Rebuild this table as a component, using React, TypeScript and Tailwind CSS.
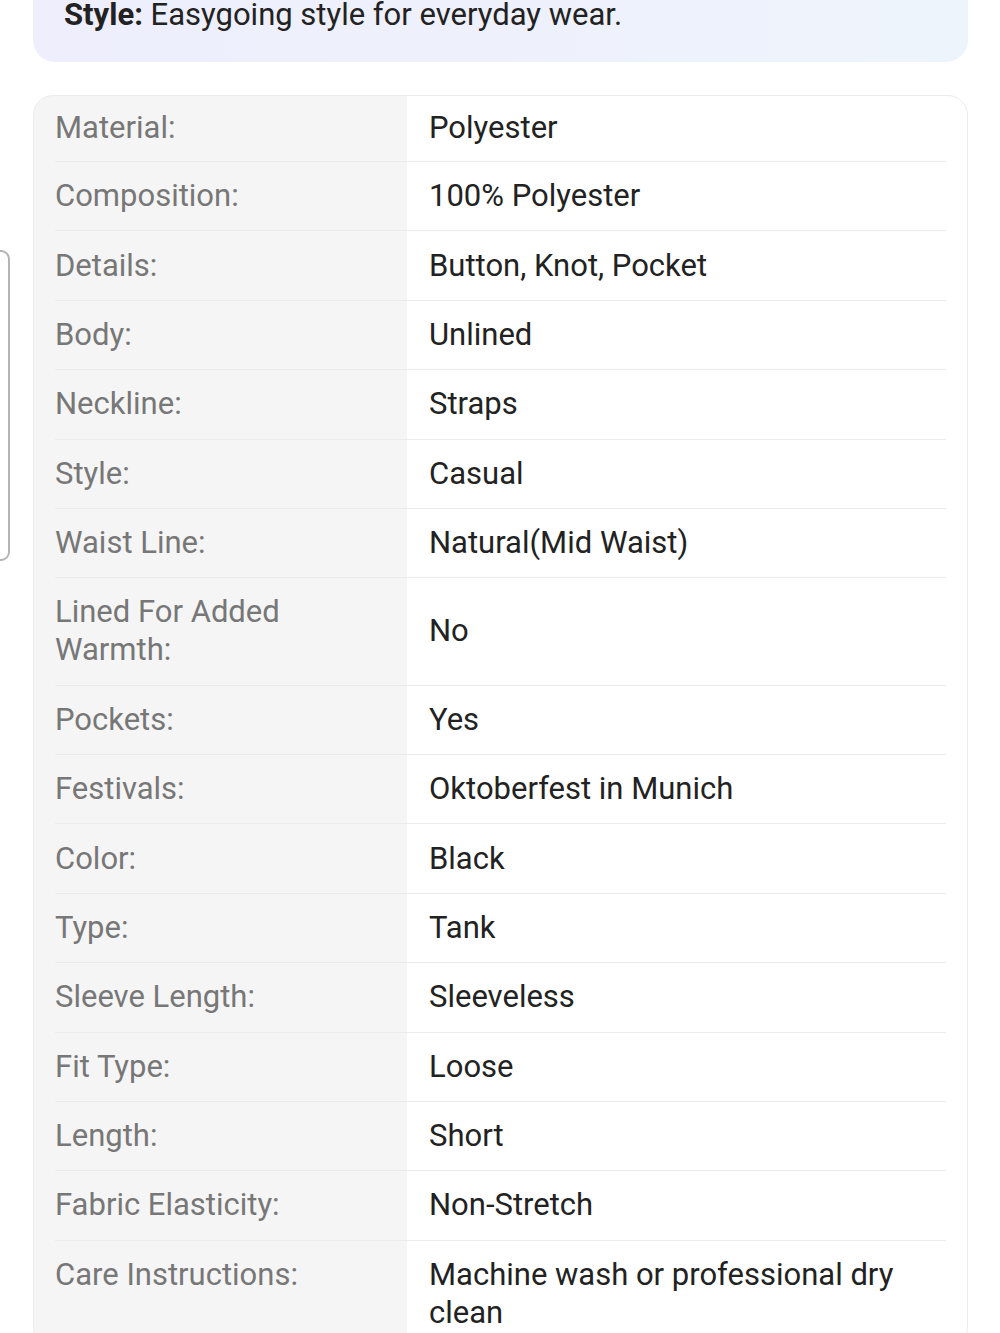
import React from "react";

const specs: { label: string; value: string }[] = [
  { label: "Material:", value: "Polyester" },
  { label: "Composition:", value: "100% Polyester" },
  { label: "Details:", value: "Button, Knot, Pocket" },
  { label: "Body:", value: "Unlined" },
  { label: "Neckline:", value: "Straps" },
  { label: "Style:", value: "Casual" },
  { label: "Waist Line:", value: "Natural(Mid Waist)" },
  { label: "Lined For Added Warmth:", value: "No" },
  { label: "Pockets:", value: "Yes" },
  { label: "Festivals:", value: "Oktoberfest in Munich" },
  { label: "Color:", value: "Black" },
  { label: "Type:", value: "Tank" },
  { label: "Sleeve Length:", value: "Sleeveless" },
  { label: "Fit Type:", value: "Loose" },
  { label: "Length:", value: "Short" },
  { label: "Fabric Elasticity:", value: "Non-Stretch" },
  { label: "Care Instructions:", value: "Machine wash or professional dry clean" },
];

export default function App() {
  return (
    <div className="relative min-h-[1333px] w-[1000px] overflow-hidden bg-white font-['Roboto','Noto_Sans',sans-serif]">
      {/* edge of a side widget peeking in from the left */}
      <div className="absolute -left-[20px] top-[250px] h-[311px] w-[30px] rounded-r-[9px] border-2 border-[#b4b4b4]" />

      <div className="ml-[33px] mr-[32px] rounded-b-[22px] bg-gradient-to-r from-[#eeeefc] to-[#eef4fc] pb-[33px] pl-[31px] pr-6">
        <p className="text-[31px] leading-[29px] text-[#222]">
          <span className="font-bold">Style:</span> Easygoing style for everyday wear.
        </p>
      </div>

      <div className="ml-[33px] mr-[32px] mt-[33px] overflow-hidden rounded-[20px] border border-[#ececec] bg-[linear-gradient(to_right,#f5f5f5_373px,#ffffff_373px)] px-[21px]">
        {specs.map((s, i) => (
          <div
            key={s.label}
            className={`grid grid-cols-[352px_1fr] text-[31px] leading-[38px] ${
              i === 0 ? "pb-[14px] pt-[13px]" : "border-t border-[#ebebeb] py-[15.2px]"
            }`}
          >
            <div className="self-start pr-6 text-[#777]">{s.label}</div>
            <div className="self-center pl-[22px] pr-4 text-[#222]">{s.value}</div>
          </div>
        ))}
      </div>
    </div>
  );
}
